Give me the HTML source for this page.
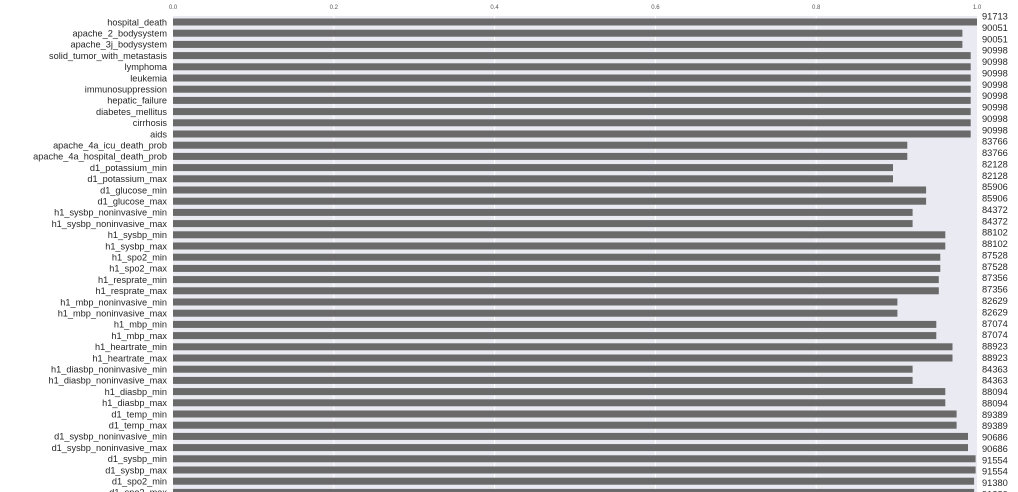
<!DOCTYPE html>
<html><head><meta charset="utf-8"><style>
html,body{margin:0;padding:0;background:#fff;width:1018px;height:492px;overflow:hidden}
svg{display:block}
.l{font:9.2px "Liberation Sans",sans-serif;fill:#262626;text-anchor:end}
.n{font:9.3px "Liberation Sans",sans-serif;fill:#262626}
.t{font:6px "Liberation Sans",sans-serif;fill:#555;text-anchor:middle}
rect.b{fill:#6a6a6a}
</style></head><body>
<svg width="1018" height="492" viewBox="0 0 1018 492">
<rect x="173" y="16" width="804" height="480" fill="#eaeaf2"/>
<g stroke="#fff" stroke-width="1">
<line x1="333.8" y1="16" x2="333.8" y2="492"/><line x1="494.6" y1="16" x2="494.6" y2="492"/><line x1="655.4" y1="16" x2="655.4" y2="492"/><line x1="816.2" y1="16" x2="816.2" y2="492"/>
</g>
<text class="t" x="173" y="9">0.0</text><text class="t" x="333.8" y="9">0.2</text><text class="t" x="494.6" y="9">0.4</text><text class="t" x="655.4" y="9">0.6</text><text class="t" x="816.2" y="9">0.8</text><text class="t" x="977" y="9">1.0</text>
<g transform="translate(0,22)"><rect class="b" x="173" y="-3.5" width="804" height="7"/><text class="l" x="167" y="3.3">hospital_death</text></g>
<g transform="translate(0,33.2)"><rect class="b" x="173" y="-3.5" width="789.4" height="7"/><text class="l" x="167" y="3.3">apache_2_bodysystem</text></g>
<g transform="translate(0,44.4)"><rect class="b" x="173" y="-3.5" width="789.4" height="7"/><text class="l" x="167" y="3.3">apache_3j_bodysystem</text></g>
<g transform="translate(0,55.6)"><rect class="b" x="173" y="-3.5" width="797.7" height="7"/><text class="l" x="167" y="3.3">solid_tumor_with_metastasis</text></g>
<g transform="translate(0,66.8)"><rect class="b" x="173" y="-3.5" width="797.7" height="7"/><text class="l" x="167" y="3.3">lymphoma</text></g>
<g transform="translate(0,78)"><rect class="b" x="173" y="-3.5" width="797.7" height="7"/><text class="l" x="167" y="3.3">leukemia</text></g>
<g transform="translate(0,89.2)"><rect class="b" x="173" y="-3.5" width="797.7" height="7"/><text class="l" x="167" y="3.3">immunosuppression</text></g>
<g transform="translate(0,100.4)"><rect class="b" x="173" y="-3.5" width="797.7" height="7"/><text class="l" x="167" y="3.3">hepatic_failure</text></g>
<g transform="translate(0,111.6)"><rect class="b" x="173" y="-3.5" width="797.7" height="7"/><text class="l" x="167" y="3.3">diabetes_mellitus</text></g>
<g transform="translate(0,122.8)"><rect class="b" x="173" y="-3.5" width="797.7" height="7"/><text class="l" x="167" y="3.3">cirrhosis</text></g>
<g transform="translate(0,134)"><rect class="b" x="173" y="-3.5" width="797.7" height="7"/><text class="l" x="167" y="3.3">aids</text></g>
<g transform="translate(0,145.2)"><rect class="b" x="173" y="-3.5" width="734.3" height="7"/><text class="l" x="167" y="3.3">apache_4a_icu_death_prob</text></g>
<g transform="translate(0,156.4)"><rect class="b" x="173" y="-3.5" width="734.3" height="7"/><text class="l" x="167" y="3.3">apache_4a_hospital_death_prob</text></g>
<g transform="translate(0,167.6)"><rect class="b" x="173" y="-3.5" width="720" height="7"/><text class="l" x="167" y="3.3">d1_potassium_min</text></g>
<g transform="translate(0,178.8)"><rect class="b" x="173" y="-3.5" width="720" height="7"/><text class="l" x="167" y="3.3">d1_potassium_max</text></g>
<g transform="translate(0,190)"><rect class="b" x="173" y="-3.5" width="753.1" height="7"/><text class="l" x="167" y="3.3">d1_glucose_min</text></g>
<g transform="translate(0,201.2)"><rect class="b" x="173" y="-3.5" width="753.1" height="7"/><text class="l" x="167" y="3.3">d1_glucose_max</text></g>
<g transform="translate(0,212.4)"><rect class="b" x="173" y="-3.5" width="739.6" height="7"/><text class="l" x="167" y="3.3">h1_sysbp_noninvasive_min</text></g>
<g transform="translate(0,223.6)"><rect class="b" x="173" y="-3.5" width="739.6" height="7"/><text class="l" x="167" y="3.3">h1_sysbp_noninvasive_max</text></g>
<g transform="translate(0,234.8)"><rect class="b" x="173" y="-3.5" width="772.3" height="7"/><text class="l" x="167" y="3.3">h1_sysbp_min</text></g>
<g transform="translate(0,246)"><rect class="b" x="173" y="-3.5" width="772.3" height="7"/><text class="l" x="167" y="3.3">h1_sysbp_max</text></g>
<g transform="translate(0,257.2)"><rect class="b" x="173" y="-3.5" width="767.3" height="7"/><text class="l" x="167" y="3.3">h1_spo2_min</text></g>
<g transform="translate(0,268.4)"><rect class="b" x="173" y="-3.5" width="767.3" height="7"/><text class="l" x="167" y="3.3">h1_spo2_max</text></g>
<g transform="translate(0,279.6)"><rect class="b" x="173" y="-3.5" width="765.8" height="7"/><text class="l" x="167" y="3.3">h1_resprate_min</text></g>
<g transform="translate(0,290.8)"><rect class="b" x="173" y="-3.5" width="765.8" height="7"/><text class="l" x="167" y="3.3">h1_resprate_max</text></g>
<g transform="translate(0,302)"><rect class="b" x="173" y="-3.5" width="724.4" height="7"/><text class="l" x="167" y="3.3">h1_mbp_noninvasive_min</text></g>
<g transform="translate(0,313.2)"><rect class="b" x="173" y="-3.5" width="724.4" height="7"/><text class="l" x="167" y="3.3">h1_mbp_noninvasive_max</text></g>
<g transform="translate(0,324.4)"><rect class="b" x="173" y="-3.5" width="763.3" height="7"/><text class="l" x="167" y="3.3">h1_mbp_min</text></g>
<g transform="translate(0,335.6)"><rect class="b" x="173" y="-3.5" width="763.3" height="7"/><text class="l" x="167" y="3.3">h1_mbp_max</text></g>
<g transform="translate(0,346.8)"><rect class="b" x="173" y="-3.5" width="779.5" height="7"/><text class="l" x="167" y="3.3">h1_heartrate_min</text></g>
<g transform="translate(0,358)"><rect class="b" x="173" y="-3.5" width="779.5" height="7"/><text class="l" x="167" y="3.3">h1_heartrate_max</text></g>
<g transform="translate(0,369.2)"><rect class="b" x="173" y="-3.5" width="739.6" height="7"/><text class="l" x="167" y="3.3">h1_diasbp_noninvasive_min</text></g>
<g transform="translate(0,380.4)"><rect class="b" x="173" y="-3.5" width="739.6" height="7"/><text class="l" x="167" y="3.3">h1_diasbp_noninvasive_max</text></g>
<g transform="translate(0,391.6)"><rect class="b" x="173" y="-3.5" width="772.3" height="7"/><text class="l" x="167" y="3.3">h1_diasbp_min</text></g>
<g transform="translate(0,402.8)"><rect class="b" x="173" y="-3.5" width="772.3" height="7"/><text class="l" x="167" y="3.3">h1_diasbp_max</text></g>
<g transform="translate(0,414)"><rect class="b" x="173" y="-3.5" width="783.6" height="7"/><text class="l" x="167" y="3.3">d1_temp_min</text></g>
<g transform="translate(0,425.2)"><rect class="b" x="173" y="-3.5" width="783.6" height="7"/><text class="l" x="167" y="3.3">d1_temp_max</text></g>
<g transform="translate(0,436.4)"><rect class="b" x="173" y="-3.5" width="795" height="7"/><text class="l" x="167" y="3.3">d1_sysbp_noninvasive_min</text></g>
<g transform="translate(0,447.6)"><rect class="b" x="173" y="-3.5" width="795" height="7"/><text class="l" x="167" y="3.3">d1_sysbp_noninvasive_max</text></g>
<g transform="translate(0,458.8)"><rect class="b" x="173" y="-3.5" width="802.6" height="7"/><text class="l" x="167" y="3.3">d1_sysbp_min</text></g>
<g transform="translate(0,470)"><rect class="b" x="173" y="-3.5" width="802.6" height="7"/><text class="l" x="167" y="3.3">d1_sysbp_max</text></g>
<g transform="translate(0,481.2)"><rect class="b" x="173" y="-3.5" width="801.1" height="7"/><text class="l" x="167" y="3.3">d1_spo2_min</text></g>
<g transform="translate(0,492.4)"><rect class="b" x="173" y="-3.5" width="801.1" height="7"/><text class="l" x="167" y="3.3">d1_spo2_max</text></g>
<g class="n">
<text class="n" x="982" y="19.5">91713</text>
<text class="n" x="982" y="30.9">90051</text>
<text class="n" x="982" y="42.3">90051</text>
<text class="n" x="982" y="53.6">90998</text>
<text class="n" x="982" y="65">90998</text>
<text class="n" x="982" y="76.4">90998</text>
<text class="n" x="982" y="87.8">90998</text>
<text class="n" x="982" y="99.2">90998</text>
<text class="n" x="982" y="110.5">90998</text>
<text class="n" x="982" y="121.9">90998</text>
<text class="n" x="982" y="133.3">90998</text>
<text class="n" x="982" y="144.7">83766</text>
<text class="n" x="982" y="156.1">83766</text>
<text class="n" x="982" y="167.4">82128</text>
<text class="n" x="982" y="178.8">82128</text>
<text class="n" x="982" y="190.2">85906</text>
<text class="n" x="982" y="201.6">85906</text>
<text class="n" x="982" y="213">84372</text>
<text class="n" x="982" y="224.3">84372</text>
<text class="n" x="982" y="235.7">88102</text>
<text class="n" x="982" y="247.1">88102</text>
<text class="n" x="982" y="258.5">87528</text>
<text class="n" x="982" y="269.9">87528</text>
<text class="n" x="982" y="281.2">87356</text>
<text class="n" x="982" y="292.6">87356</text>
<text class="n" x="982" y="304">82629</text>
<text class="n" x="982" y="315.4">82629</text>
<text class="n" x="982" y="326.8">87074</text>
<text class="n" x="982" y="338.1">87074</text>
<text class="n" x="982" y="349.5">88923</text>
<text class="n" x="982" y="360.9">88923</text>
<text class="n" x="982" y="372.3">84363</text>
<text class="n" x="982" y="383.7">84363</text>
<text class="n" x="982" y="395">88094</text>
<text class="n" x="982" y="406.4">88094</text>
<text class="n" x="982" y="417.8">89389</text>
<text class="n" x="982" y="429.2">89389</text>
<text class="n" x="982" y="440.6">90686</text>
<text class="n" x="982" y="451.9">90686</text>
<text class="n" x="982" y="463.3">91554</text>
<text class="n" x="982" y="474.7">91554</text>
<text class="n" x="982" y="486.1">91380</text>
<text class="n" x="982" y="497.5">91380</text>
</g>
</svg>
</body></html>
